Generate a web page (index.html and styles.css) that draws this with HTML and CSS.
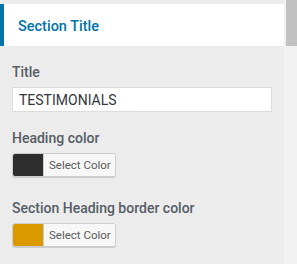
FILE: index.html
```html
<!DOCTYPE html>
<html>
<head>
<meta charset="utf-8">
<link rel="stylesheet" href="styles.css">
</head>
<body>
<div class="frame">
  <div class="panel">
    <div class="section-head">Section Title</div>
    <div class="controls">
      <div class="control">
        <div class="label">Title</div>
        <input class="text-input" type="text" value="TESTIMONIALS">
      </div>
      <div class="control">
        <div class="label">Heading color</div>
        <button class="color-btn"><span class="swatch dark"></span><span class="btn-text">Select Color</span></button>
      </div>
      <div class="control">
        <div class="label">Section Heading border color</div>
        <button class="color-btn"><span class="swatch gold"></span><span class="btn-text">Select Color</span></button>
      </div>
    </div>
  </div>
  <div class="scrollbar"><div class="thumb"></div></div>
</div>
</body>
</html>
```
FILE: styles.css
```css
html, body {
  margin: 0;
  padding: 0;
  background: #eeeeee;
  font-family: Roboto, "Liberation Sans", sans-serif;
}
.frame {
  display: flex;
  width: 297px;
  height: 264px;
  overflow: hidden;
}
.panel {
  width: 284px;
  padding-top: 4px;
  background: #ececec;
}
.section-head {
  height: 42px;
  box-sizing: border-box;
  background: #ffffff;
  border-left: 4px solid #0073aa;
  padding-left: 14px;
  padding-top: 2px;
  display: flex;
  align-items: center;
  color: #0073aa;
  font-size: 14.5px;
  font-weight: 500;
}
.controls {
  padding: 17px 12px 0 12px;
}
.control {
  margin-bottom: 17px;
}
.control:nth-child(2) {
  margin-bottom: 22px;
}
.label {
  font-size: 14px;
  line-height: 16px;
  font-weight: 500;
  color: #555d66;
  margin-bottom: 8px;
  position: relative;
  top: 1px;
}
.text-input {
  display: block;
  box-sizing: border-box;
  width: 260px;
  height: 25px;
  margin: 0;
  border: 1px solid #dddddd;
  background: #ffffff;
  padding: 0 5px 0 6px;
  font-family: Roboto, "Liberation Sans", sans-serif;
  font-size: 14px;
  color: #32373c;
  outline: none;
}
.color-btn {
  display: flex;
  align-items: stretch;
  box-sizing: border-box;
  width: 104px;
  height: 24px;
  margin: 0;
  padding: 0;
  border: 1px solid #cccccc;
  border-radius: 3px;
  background: #f7f7f7;
  box-shadow: 0 1px 0 #cccccc;
  overflow: hidden;
  cursor: pointer;
}
.swatch {
  flex: none;
  width: 30px;
  border-right: 1px solid #cccccc;
}
.swatch.dark { background: #2d2d2d; }
.swatch.gold { background: #dd9900; }
.btn-text {
  flex: 1;
  padding: 0 5px;
  white-space: nowrap;
  font-family: Roboto, "Liberation Sans", sans-serif;
  font-size: 11.5px;
  line-height: 22px;
  color: #5a5a5a;
  text-align: left;
  background: #f7f7f7;
}
.scrollbar {
  width: 13px;
  background: #f1f1f1;
  padding-left: 2px;
  box-sizing: border-box;
}
.thumb {
  width: 11px;
  height: 46px;
  background: #c1c1c1;
}
```
